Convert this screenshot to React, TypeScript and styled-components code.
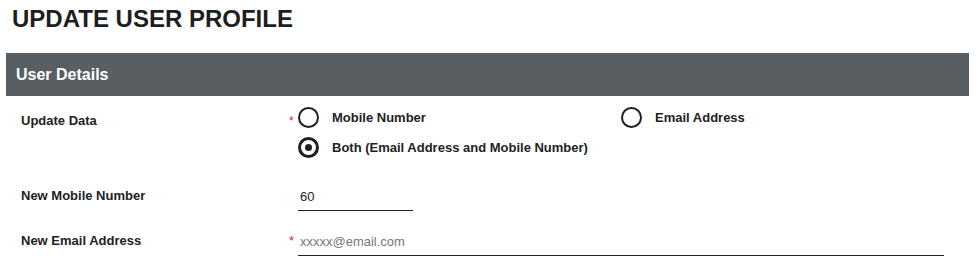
import styled, { createGlobalStyle } from "styled-components";

const GlobalStyle = createGlobalStyle`
  body {
    margin: 0;
    background: #fff;
    font-family: "Liberation Sans", Arial, sans-serif;
    color: #212121;
  }
`;

const Page = styled.div`
  padding: 5px 10px 0 6px;
`;

const Title = styled.h1`
  margin: 0 0 20px 6px;
  font-size: 24px;
  line-height: 28px;
  font-weight: 700;
  color: #1e1e1e;
`;

const SectionHeader = styled.div`
  height: 43px;
  line-height: 43px;
  padding-left: 10px;
  background: #585e61;
  color: #fff;
  font-size: 16px;
  font-weight: 700;
`;

const Form = styled.div`
  display: flex;
  flex-direction: column;
  padding: 11px 0 0 15px;
`;

const Row = styled.div<{ $after: number }>`
  display: grid;
  grid-template-columns: 268px 9px 1fr;
  align-items: start;
  margin-bottom: ${(p) => p.$after}px;
`;

const Label = styled.div<{ $top?: number }>`
  font-size: 13px;
  line-height: 16px;
  font-weight: 700;
  color: #222;
  padding-top: ${(p) => p.$top ?? 0}px;
`;

const Required = styled.span<{ $size: number; $top: number }>`
  display: block;
  color: #e8202a;
  font-size: ${(p) => p.$size}px;
  line-height: 16px;
  padding-top: ${(p) => p.$top}px;
`;

const RadioGroup = styled.div`
  display: grid;
  grid-template-columns: 323px auto;
  row-gap: 9px;
`;

const RadioOption = styled.label`
  display: flex;
  align-items: center;
  gap: 13px;
  height: 21px;
  font-size: 13px;
  font-weight: 700;
  color: #222;
  cursor: pointer;
`;

const RadioCircle = styled.span<{ $checked?: boolean }>`
  position: relative;
  box-sizing: border-box;
  width: 21px;
  height: 21px;
  flex: none;
  border-radius: 50%;
  border: ${(p) => (p.$checked ? 3 : 2)}px solid #1f1f1f;

  &::after {
    content: "";
    display: ${(p) => (p.$checked ? "block" : "none")};
    position: absolute;
    left: 50%;
    top: 50%;
    width: 7px;
    height: 7px;
    margin: -3.5px 0 0 -3.5px;
    border-radius: 50%;
    background: #1f1f1f;
  }
`;

const TextInput = styled.input<{ $width: number }>`
  box-sizing: border-box;
  width: ${(p) => p.$width}px;
  height: 23px;
  padding: 0 0 6px 2px;
  border: none;
  border-bottom: 1px solid #222;
  background: transparent;
  font-family: "Liberation Sans", Arial, sans-serif;
  font-size: 13px;
  color: #222;
  outline: none;

  &::placeholder {
    color: #777;
  }
`;

const options = [
  { label: "Mobile Number", checked: false },
  { label: "Email Address", checked: false },
  { label: "Both (Email Address and Mobile Number)", checked: true },
];

export default function App() {
  return (
    <>
      <GlobalStyle />
      <Page>
        <Title>UPDATE USER PROFILE</Title>
        <SectionHeader>User Details</SectionHeader>
        <Form>
          <Row $after={30}>
            <Label $top={6}>Update Data</Label>
            <Required $size={12} $top={6}>*</Required>
            <RadioGroup>
              {options.map((o) => (
                <RadioOption key={o.label}>
                  <RadioCircle $checked={o.checked} />
                  {o.label}
                </RadioOption>
              ))}
            </RadioGroup>
          </Row>
          <Row $after={22}>
            <Label>New Mobile Number</Label>
            <span />
            <TextInput $width={115} defaultValue="60" />
          </Row>
          <Row $after={0}>
            <Label>New Email Address</Label>
            <Required $size={13} $top={0}>*</Required>
            <TextInput $width={646} placeholder="xxxxx@email.com" />
          </Row>
        </Form>
      </Page>
    </>
  );
}
